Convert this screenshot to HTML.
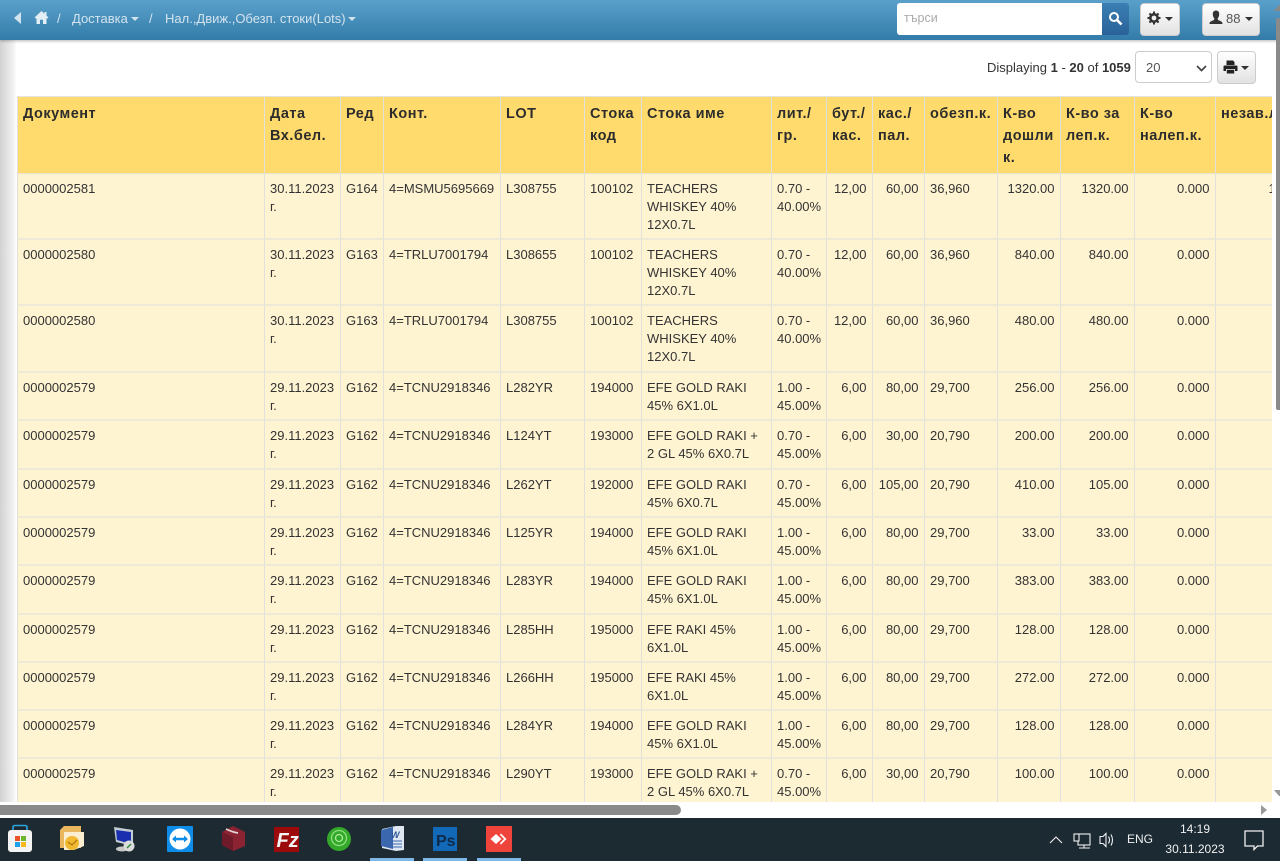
<!DOCTYPE html>
<html lang="bg"><head><meta charset="utf-8"><title>Lots</title>
<style>
html,body{margin:0;padding:0;width:1280px;height:861px;overflow:hidden;background:#fff;font-family:"Liberation Sans",sans-serif;color:#333}
.a{position:absolute}
#top{left:0;top:0;width:1280px;height:40px;background:linear-gradient(#5aa0cb,#337ca9);box-shadow:0 1px 3px rgba(0,0,0,.3)}
#top span{position:absolute;top:11px;font-size:13px;line-height:15px;color:#d3e3ee;white-space:nowrap}
.car{position:absolute;width:0;height:0;border-left:4px solid transparent;border-right:4px solid transparent;border-top:4px solid #d3e3ee}
.btn{position:absolute;box-sizing:border-box;background:linear-gradient(#fff,#e2e2e2);border:1px solid #ccc;border-radius:4px}
.car2{position:absolute;width:0;height:0;border-left:4px solid transparent;border-right:4px solid transparent;border-top:4px solid #333}
#wrap{left:17px;top:96px;width:1255px;height:706px;overflow:hidden}
table{border-collapse:separate;border-spacing:0;table-layout:fixed;width:1305px;font-size:13px;line-height:18.4px;color:#333}
th,td{box-sizing:border-box;vertical-align:top;text-align:left;white-space:nowrap;overflow:hidden;border-right:1px solid #e2e0dc}
th{background:#ffdb6e;height:78px;padding:6px 4px 0 5px;font-size:14.5px;line-height:22px;font-weight:bold;letter-spacing:.5px;border-top:1px solid #e4e4e4;border-bottom:1px solid #e8e3d0;color:#2c2c2c}
td{background:#fff4d2;padding:5.5px 4.5px 0 5px;border-bottom:2px solid #efe9d8}
th:first-child,td:first-child{border-left:1px solid #e2e0dc}
td.r{text-align:right;padding-right:5.5px}
.h48 td{height:48px}.h49 td{height:49px}.h66 td{height:66px}.h67 td{height:67px}
</style></head><body>
<div class="a" style="left:0;top:40px;width:17px;height:762px;background:linear-gradient(90deg,#d2d2d2,#eeeeee 70%,#ffffff)"></div>

<div id="top" class="a">
<svg class="a" style="left:13px;top:11px" width="10" height="14" viewBox="0 0 10 14"><path d="M8 1 L8 13 L1 7 Z" fill="#d3e3ee"/></svg>
<svg class="a" style="left:34px;top:10px" width="15" height="15" viewBox="0 0 15 15"><path d="M7.5 1 L0.5 7.5 L2 8.6 L2.5 8.2 V14 H6 V9.8 H9 V14 H12.5 V8.2 L13 8.6 L14.5 7.5 L12.5 5.6 V2 H10.5 V3.8 Z" fill="#e3eef5"/></svg>
<span style="left:57px">/</span>
<span style="left:72px">Доставка</span><i class="car" style="left:131px;top:17px"></i>
<span style="left:149px">/</span>
<span style="left:165px">Нал.,Движ.,Обезп. стоки(Lots)</span><i class="car" style="left:348px;top:17px"></i>
<div class="a" style="left:897px;top:3px;width:205px;height:32px;background:#fff;border-radius:3px 0 0 3px"></div>
<span style="left:904px;top:11px;color:#aaa;font-size:12.5px">търси</span>
<div class="a" style="left:1102px;top:3px;width:27px;height:32px;background:linear-gradient(#3a7fb4,#2a6298);border-radius:0 3px 3px 0"></div>
<svg class="a" style="left:1108px;top:11px" width="15" height="15" viewBox="0 0 15 15"><circle cx="6" cy="6" r="4" fill="none" stroke="#fff" stroke-width="2"/><path d="M9 9 L13.5 13.5" stroke="#fff" stroke-width="2.6"/></svg>
<div class="btn" style="left:1140px;top:3px;width:40px;height:33px"></div>
<svg class="a" style="left:1147px;top:11px" width="14" height="14" viewBox="0 0 14 14"><circle cx="7" cy="7" r="3.7" fill="none" stroke="#333" stroke-width="2.6"/><path d="M7 .5V3M7 11V13.5M.5 7H3M11 7H13.5M2.4 2.4L4.2 4.2M9.8 9.8L11.6 11.6M2.4 11.6L4.2 9.8M9.8 4.2L11.6 2.4" stroke="#333" stroke-width="2"/></svg>
<i class="car2" style="left:1165px;top:17px"></i>
<div class="btn" style="left:1202px;top:3px;width:58px;height:33px"></div>
<svg class="a" style="left:1209px;top:10px" width="14" height="15" viewBox="0 0 14 15"><path d="M7 .5 C9.4 .5 10.4 2.4 10.2 4.5 C10 6.6 9.2 8 8.6 8.6 C8.6 9.6 9 10 10.4 10.6 C12.4 11.4 13.5 12 13.5 14 H.5 C.5 12 1.6 11.4 3.6 10.6 C5 10 5.4 9.6 5.4 8.6 C4.8 8 4 6.6 3.8 4.5 C3.6 2.4 4.6 .5 7 .5Z" fill="#333"/></svg>
<span style="left:1226px;top:11px;color:#555;font-size:13px">88</span>
<i class="car2" style="left:1245px;top:17px"></i>
</div>

<div class="a" style="left:987px;top:60px;font-size:13px;line-height:15px;color:#333;white-space:nowrap">Displaying <b>1</b> - <b>20</b> of <b>1059</b></div>
<div class="a" style="left:1135px;top:51px;width:77px;height:32px;box-sizing:border-box;background:#fff;border:1px solid #ccc;border-radius:4px"></div>
<div class="a" style="left:1146px;top:60px;font-size:13px;line-height:15px;color:#555">20</div>
<svg class="a" style="left:1196px;top:65px" width="11" height="7" viewBox="0 0 11 7"><path d="M1 1 L5.5 5.500 L10 1" fill="none" stroke="#444" stroke-width="1.7"/></svg>
<div class="btn" style="left:1217px;top:51px;width:39px;height:33px"></div>
<svg class="a" style="left:1223px;top:60px" width="15" height="14" viewBox="0 0 15 14"><path d="M3.5 0.5H10L11.5 2V5H3.5ZM1.5 5.5H13.5Q14.5 5.5 14.5 6.5V11H12V9H3V11H.5V6.5Q.5 5.5 1.5 5.5ZM3.8 9.8H11.2V13.5H3.8Z" fill="#222"/></svg>
<i class="car2" style="left:1241px;top:66px"></i>

<div id="wrap" class="a">
<table>
<colgroup><col style="width:248px"><col style="width:76px"><col style="width:43px"><col style="width:117px"><col style="width:84px"><col style="width:57px"><col style="width:130px"><col style="width:55px"><col style="width:46px"><col style="width:52px"><col style="width:73px"><col style="width:63px"><col style="width:74px"><col style="width:81px"><col style="width:106px"></colgroup>
<thead><tr><th>Документ</th><th>Дата<br>Вх.бел.</th><th>Ред</th><th>Конт.</th><th>LOT</th><th>Стока<br>код</th><th>Стока име</th><th>лит./<br>гр.</th><th>бут./<br>кас.</th><th>кас./<br>пал.</th><th>обезп.к.</th><th>К-во<br>дошли<br>к.</th><th>К-во за<br>леп.к.</th><th>К-во<br>налеп.к.</th><th>незав.л.</th></tr></thead>
<tbody>
<tr class="h66"><td>0000002581</td><td>30.11.2023<br>г.</td><td>G164</td><td>4=MSMU5695669</td><td>L308755</td><td>100102</td><td>TEACHERS<br>WHISKEY 40%<br>12X0.7L</td><td>0.70 -<br>40.00%</td><td class="r">12,00</td><td class="r">60,00</td><td>36,960</td><td class="r">1320.00</td><td class="r">1320.00</td><td class="r">0.000</td><td class="r">1320.00</td></tr>
<tr class="h66"><td>0000002580</td><td>30.11.2023<br>г.</td><td>G163</td><td>4=TRLU7001794</td><td>L308655</td><td>100102</td><td>TEACHERS<br>WHISKEY 40%<br>12X0.7L</td><td>0.70 -<br>40.00%</td><td class="r">12,00</td><td class="r">60,00</td><td>36,960</td><td class="r">840.00</td><td class="r">840.00</td><td class="r">0.000</td><td class="r">840.00</td></tr>
<tr class="h67"><td>0000002580</td><td>30.11.2023<br>г.</td><td>G163</td><td>4=TRLU7001794</td><td>L308755</td><td>100102</td><td>TEACHERS<br>WHISKEY 40%<br>12X0.7L</td><td>0.70 -<br>40.00%</td><td class="r">12,00</td><td class="r">60,00</td><td>36,960</td><td class="r">480.00</td><td class="r">480.00</td><td class="r">0.000</td><td class="r">480.00</td></tr>
<tr class="h48"><td>0000002579</td><td>29.11.2023<br>г.</td><td>G162</td><td>4=TCNU2918346</td><td>L282YR</td><td>194000</td><td>EFE GOLD RAKI<br>45% 6X1.0L</td><td>1.00 -<br>45.00%</td><td class="r">6,00</td><td class="r">80,00</td><td>29,700</td><td class="r">256.00</td><td class="r">256.00</td><td class="r">0.000</td><td class="r">256.00</td></tr>
<tr class="h49"><td>0000002579</td><td>29.11.2023<br>г.</td><td>G162</td><td>4=TCNU2918346</td><td>L124YT</td><td>193000</td><td>EFE GOLD RAKI +<br>2 GL 45% 6X0.7L</td><td>0.70 -<br>45.00%</td><td class="r">6,00</td><td class="r">30,00</td><td>20,790</td><td class="r">200.00</td><td class="r">200.00</td><td class="r">0.000</td><td class="r">200.00</td></tr>
<tr class="h48"><td>0000002579</td><td>29.11.2023<br>г.</td><td>G162</td><td>4=TCNU2918346</td><td>L262YT</td><td>192000</td><td>EFE GOLD RAKI<br>45% 6X0.7L</td><td>0.70 -<br>45.00%</td><td class="r">6,00</td><td class="r">105,00</td><td>20,790</td><td class="r">410.00</td><td class="r">105.00</td><td class="r">0.000</td><td class="r">105.00</td></tr>
<tr class="h48"><td>0000002579</td><td>29.11.2023<br>г.</td><td>G162</td><td>4=TCNU2918346</td><td>L125YR</td><td>194000</td><td>EFE GOLD RAKI<br>45% 6X1.0L</td><td>1.00 -<br>45.00%</td><td class="r">6,00</td><td class="r">80,00</td><td>29,700</td><td class="r">33.00</td><td class="r">33.00</td><td class="r">0.000</td><td class="r">33.00</td></tr>
<tr class="h49"><td>0000002579</td><td>29.11.2023<br>г.</td><td>G162</td><td>4=TCNU2918346</td><td>L283YR</td><td>194000</td><td>EFE GOLD RAKI<br>45% 6X1.0L</td><td>1.00 -<br>45.00%</td><td class="r">6,00</td><td class="r">80,00</td><td>29,700</td><td class="r">383.00</td><td class="r">383.00</td><td class="r">0.000</td><td class="r">383.00</td></tr>
<tr class="h48"><td>0000002579</td><td>29.11.2023<br>г.</td><td>G162</td><td>4=TCNU2918346</td><td>L285HH</td><td>195000</td><td>EFE RAKI 45%<br>6X1.0L</td><td>1.00 -<br>45.00%</td><td class="r">6,00</td><td class="r">80,00</td><td>29,700</td><td class="r">128.00</td><td class="r">128.00</td><td class="r">0.000</td><td class="r">128.00</td></tr>
<tr class="h48"><td>0000002579</td><td>29.11.2023<br>г.</td><td>G162</td><td>4=TCNU2918346</td><td>L266HH</td><td>195000</td><td>EFE RAKI 45%<br>6X1.0L</td><td>1.00 -<br>45.00%</td><td class="r">6,00</td><td class="r">80,00</td><td>29,700</td><td class="r">272.00</td><td class="r">272.00</td><td class="r">0.000</td><td class="r">272.00</td></tr>
<tr class="h48"><td>0000002579</td><td>29.11.2023<br>г.</td><td>G162</td><td>4=TCNU2918346</td><td>L284YR</td><td>194000</td><td>EFE GOLD RAKI<br>45% 6X1.0L</td><td>1.00 -<br>45.00%</td><td class="r">6,00</td><td class="r">80,00</td><td>29,700</td><td class="r">128.00</td><td class="r">128.00</td><td class="r">0.000</td><td class="r">128.00</td></tr>
<tr class="h48"><td>0000002579</td><td>29.11.2023<br>г.</td><td>G162</td><td>4=TCNU2918346</td><td>L290YT</td><td>193000</td><td>EFE GOLD RAKI +<br>2 GL 45% 6X0.7L</td><td>0.70 -<br>45.00%</td><td class="r">6,00</td><td class="r">30,00</td><td>20,790</td><td class="r">100.00</td><td class="r">100.00</td><td class="r">0.000</td><td class="r">100.00</td></tr>
</tbody></table>
</div>

<!-- right scrollbar -->
<svg class="a" style="left:1274px;top:4px" width="6" height="8" viewBox="0 0 6 8"><path d="M0 7 L5 1 L6 1 V7Z" fill="#888"/></svg>
<div class="a" style="left:1276px;top:18px;width:4px;height:392px;background:#8a8a8a;border-radius:2px 0 0 2px"></div>
<svg class="a" style="left:1274px;top:789px" width="6" height="8" viewBox="0 0 6 8"><path d="M0 1 L6 1 V7 L5 7Z" fill="#999"/></svg>
<!-- bottom scrollbar -->
<div class="a" style="left:0;top:805px;width:681px;height:10px;background:#8a8a8a;border-radius:0 5px 5px 0"></div>
<svg class="a" style="left:1260px;top:805px" width="8" height="10" viewBox="0 0 8 10"><path d="M1 0 L7 5 L1 10Z" fill="#999"/></svg>

<!-- taskbar -->
<div class="a" style="left:0;top:818px;width:1280px;height:43px;background:linear-gradient(90deg,#1d2a31,#1c2a33)"></div>
<svg class="a" style="left:0;top:818px" width="540" height="43" viewBox="0 818 540 43">
<!-- store -->
<path d="M13 830V827Q13 825.500 15 825.500H25Q27 825.500 27 827V830" fill="none" stroke="#2aa5e0" stroke-width="1.6"/>
<rect x="8" y="830" width="24" height="22" rx="3" fill="#f4f4f4"/>
<rect x="15" y="836" width="5" height="5" fill="#e8532b"/><rect x="21" y="836" width="5" height="5" fill="#6cb52e"/><rect x="15" y="842" width="5" height="5" fill="#1ea1e6"/><rect x="21" y="842" width="5" height="5" fill="#f6b81a"/>
<!-- outlook -->
<path d="M60 830 L64 826 H81 V848 H60Z" fill="#e9b75e"/><path d="M64 832 H84 V846 L74 850 H64Z" fill="#fbeed0"/>
<circle cx="72" cy="843" r="7" fill="#f1b92f"/><path d="M68 842 L72 845 L77 840" stroke="#a87512" stroke-width="1.2" fill="none"/>
<!-- rdp -->
<path d="M114 827 L133 830 V846 L116 842Z" fill="#c4ccd4"/><path d="M116 830 L131 832 V844 L117 840Z" fill="#1a2fb0"/>
<ellipse cx="122" cy="849" rx="6" ry="2.5" fill="#c8c8c8"/><circle cx="129" cy="846" r="5.5" fill="#dcdcdc"/><path d="M127 848 L131 844" stroke="#2d8a3c" stroke-width="1.5"/>
<!-- teamviewer -->
<rect x="167" y="826" width="26" height="26" rx="1" fill="#0e8ee9"/><circle cx="180" cy="839" r="10.5" fill="#fff"/>
<path d="M172 839 L176 835.5 V837.8 H184 V835.5 L188 839 L184 842.5 V840.2 H176 V842.5Z" fill="#0e8ee9"/>
<!-- box -->
<path d="M233 826 L245 832 V846 L233 851 L222 845 V832Z" fill="#8c2333"/><path d="M222 832 L233 837 V851 L222 845Z" fill="#6f1a28"/><path d="M226 829 Q232 832 238 833" stroke="#e3d5d6" stroke-width="1.8" fill="none"/>
<!-- filezilla -->
<rect x="274" y="827" width="25" height="25" fill="#9c0a0c"/>
<text x="276.500" y="847" font-family="Liberation Sans,sans-serif" font-size="20" font-style="italic" font-weight="bold" fill="#f3f3f3">Fz</text>
<!-- green -->
<circle cx="339" cy="839" r="12" fill="#34a82a"/><circle cx="339" cy="838" r="7.5" fill="none" stroke="#8fe07e" stroke-width="1.3"/><circle cx="339" cy="838" r="3.5" fill="none" stroke="#a8ec98" stroke-width="1.3"/>
<!-- word -->
<path d="M382 829 L396 826 H404 V850 L396 851 L382 848Z" fill="#dfe7f2"/><path d="M381 830 L393 827 V849 L381 846Z" fill="#3a67ae"/>
<text x="391" y="838" font-family="Liberation Sans,sans-serif" font-size="9" font-weight="bold" font-style="italic" fill="#2b5797">W</text>
<path d="M392 841H402M392 844H402M392 847H402" stroke="#3a67ae" stroke-width="1"/>
<!-- ps -->
<rect x="433" y="827" width="24" height="24" fill="#1269b8"/>
<text x="436" y="846" font-family="Liberation Sans,sans-serif" font-size="16" font-weight="bold" fill="#0d2a4a">Ps</text>
<!-- anydesk -->
<rect x="486" y="826" width="26" height="26" fill="#ef443b"/>
<path d="M490.5 839 L496 834 L501.5 839 L496 844Z" fill="#fff"/><path d="M501 833.5 L506.5 839 L501 844.5 L499.8 843.3 L504 839 L499.8 834.7Z" fill="#fff"/>
</svg>
<div class="a" style="left:370px;top:858px;width:44px;height:3px;background:#7fb8e6"></div>
<div class="a" style="left:423px;top:858px;width:44px;height:3px;background:#7fb8e6"></div>
<div class="a" style="left:477px;top:858px;width:44px;height:3px;background:#7fb8e6"></div>
<svg class="a" style="left:1045px;top:828px" width="235" height="24" viewBox="1045 828 235 24" fill="none" stroke="#f0f0f0" stroke-width="1.1">
<path d="M1050 843 L1056 837 L1062 843"/>
<rect x="1078" y="834" width="12" height="11"/><rect x="1074" y="834" width="5" height="7" fill="#1d2a31"/><path d="M1084 845 V848 M1079 848 H1090"/>
<path d="M1100 836.500 H1103 L1106 833.500 V846.500 L1103 843.500 H1100Z"/><path d="M1108.500 836.500 Q1110.500 840 1108.500 843.500M1111 834.500 Q1114 840 1111 845.500"/>
<path d="M1245 831 H1263 V846 H1257.500 L1254 849.500 V846 H1245Z" stroke-width="1.3"/>
</svg>
<div class="a" style="left:1127px;top:832px;font-size:12px;line-height:15px;color:#f0f0f0">ENG</div>
<div class="a" style="left:1164px;top:819px;width:62px;text-align:center;font-size:12px;line-height:20px;color:#f0f0f0">14:19<br>30.11.2023</div>
</body></html>
